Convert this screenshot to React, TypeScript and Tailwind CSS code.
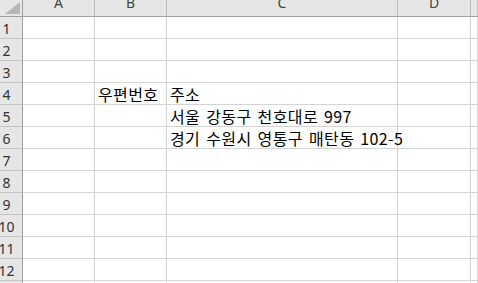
const cols = ["A", "B", "C", "D", ""];
const widths = ["w-[72px]", "w-[72px]", "w-[231px]", "w-[73px]", "flex-1"];

const data: Record<number, Record<number, string>> = {
  4: { 1: "우편번호", 2: "주소" },
  5: { 2: "서울 강동구 천호대로 997" },
  6: { 2: "경기 수원시 영통구 매탄동 102-5" },
};

const Corner = () => (
  <div className="w-[23px] h-[17px] shrink-0 bg-[#e6e6e6] border-r border-b border-[#9f9f9f] flex items-end justify-end overflow-hidden">
    <svg width="15" height="12" viewBox="0 0 15 12" className="mb-[2px] mr-[2px]">
      <polygon points="15,0 15,12 0,12" fill="#b7b7b7" />
    </svg>
  </div>
);

export default function App() {
  const rows = Array.from({ length: 13 }, (_, i) => i + 1);
  return (
    <div
      className="w-[478px] h-[283px] overflow-hidden bg-white text-black"
      style={{ fontFamily: '"Noto Sans", "Noto Sans CJK KR", sans-serif' }}
    >
      <div className="flex h-[17px]">
        <Corner />
        {cols.map((c, i) => (
          <div
            key={i}
            className={`${widths[i]} shrink-0 h-[17px] bg-[#e6e6e6] border-r border-b border-[#bdbdbd] border-b-[#9f9f9f] flex justify-center items-start overflow-hidden`}
          >
            <span className="text-[14px] leading-[16px] -mt-[5px] text-[#444]">{c}</span>
          </div>
        ))}
      </div>
      {rows.map((r) => (
        <div key={r} className="flex h-[22px]">
          <div className="w-[23px] shrink-0 bg-[#e6e6e6] border-r border-b border-[#c4c4c4] border-r-[#9f9f9f] flex items-center justify-center pr-[9px]">
            <span className="text-[14px] leading-[16px] text-[#333] mt-[2px]">{r}</span>
          </div>
          {cols.map((_, i) => (
            <div
              key={i}
              className={`${widths[i]} shrink-0 border-r border-b border-[#d4d4d4] flex items-center pl-[3px] whitespace-nowrap`}
            >
              <span
                className="text-[16px] leading-[20px] mt-[1px] tracking-[0.4px] [word-spacing:2px]"
                style={{ fontFamily: '"Noto Sans CJK KR", sans-serif' }}
              >
                {data[r]?.[i] ?? ""}
              </span>
            </div>
          ))}
        </div>
      ))}
    </div>
  );
}
